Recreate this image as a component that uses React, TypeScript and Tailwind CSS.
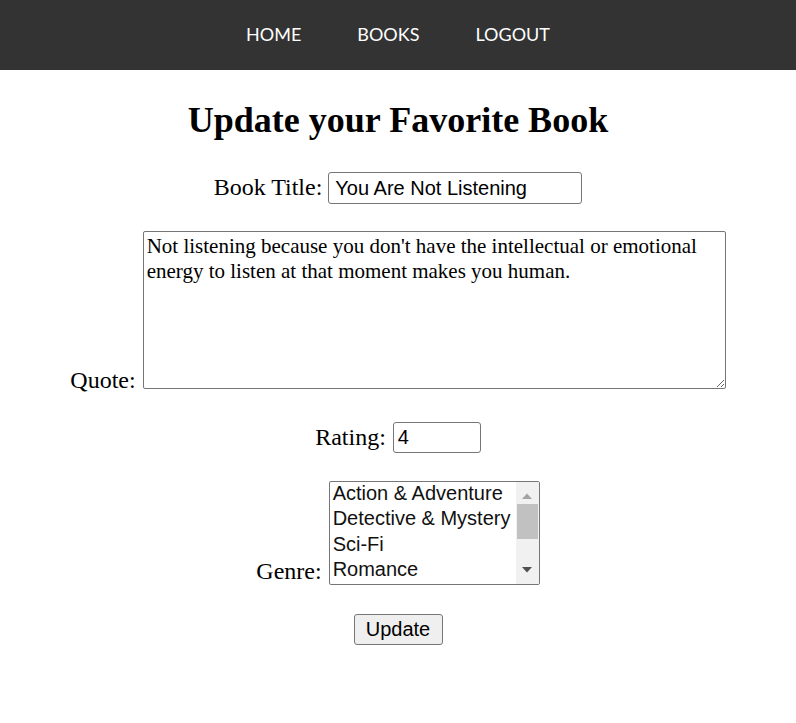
import React from 'react';

const genres = [
  'Action & Adventure',
  'Detective & Mystery',
  'Sci-Fi',
  'Romance',
  'Horror',
  'Fantasy',
  'Biography',
];

const App = () => {
  return (
    <div className="min-h-screen bg-white text-black font-['Liberation_Serif','Times_New_Roman',serif]">
      {/* Top nav */}
      <nav className="h-[70px] bg-[#333333] flex items-center justify-center gap-[56px] font-['Lato',sans-serif] text-[18px] text-white uppercase">
        <a href="#" className="leading-none -translate-y-[1px]">Home</a>
        <a href="#" className="leading-none -translate-y-[1px]">Books</a>
        <a href="#" className="leading-none -translate-y-[1px]">Logout</a>
      </nav>

      <main className="flex flex-col items-center">
        <h1 className="mt-[30px] text-[36px] leading-[41px] font-bold">Update your Favorite Book</h1>

        {/* Title */}
        <div className="mt-[31px] flex items-center justify-center gap-[6px]">
          <label className="text-[24px] leading-[24px] -translate-y-[1px]">Book Title:</label>
          <input
            type="text"
            defaultValue="You Are Not Listening"
            className="w-[254px] h-[32px] px-[6px] border border-[#767676] rounded-[3px] bg-white font-['Liberation_Sans',Arial,sans-serif] text-[20px] leading-[23px] outline-none"
          />
        </div>

        {/* Quote */}
        <div className="mt-[27px] flex items-end justify-center gap-[7px]">
          <label className="text-[24px] leading-[24px] translate-y-[3px]">Quote:</label>
          <textarea
            defaultValue="Not listening because you don't have the intellectual or emotional energy to listen at that moment makes you human."
            className="w-[583px] h-[158px] px-[3px] pt-[2px] border border-[#767676] rounded-[2px] bg-white text-[21px] leading-[25px] outline-none resize"
          />
        </div>

        {/* Rating */}
        <div className="mt-[33px] flex items-center justify-center gap-[7px]">
          <label className="text-[24px] leading-[24px] -translate-y-[1px]">Rating:</label>
          <input
            type="text"
            defaultValue="4"
            className="w-[88px] h-[31px] px-[4px] border border-[#767676] rounded-[3px] bg-white font-['Liberation_Sans',Arial,sans-serif] text-[20px] leading-[23px] outline-none"
          />
        </div>

        {/* Genre */}
        <div className="mt-[28px] flex items-end justify-center gap-[7px]">
          <label className="text-[24px] leading-[24px] -translate-y-[2px]">Genre:</label>
          <div className="w-[211px] h-[104px] flex border border-[#767676] rounded-[2px] bg-white overflow-hidden font-['Liberation_Sans',Arial,sans-serif] text-[20px] text-[#111]">
            <ul className="flex-1 text-left">
              {genres.slice(0, 4).map((g) => (
                <li key={g} className="h-[25.4px] leading-[23px] pl-[3px] whitespace-nowrap">
                  {g}
                </li>
              ))}
            </ul>
            <div className="w-[23px] bg-[#f1f1f1] flex flex-col items-center">
              <svg width="12" height="8" viewBox="0 0 12 8" className="mt-[10px]">
                <path d="M1 7 L6 1.5 L11 7 Z" fill="#a3a3a3" />
              </svg>
              <div className="mt-[4px] w-[21px] h-[35px] bg-[#c1c1c1]" />
              <div className="flex-1" />
              <svg width="12" height="8" viewBox="0 0 12 8" className="mb-[10px]">
                <path d="M1 1 L11 1 L6 6.5 Z" fill="#505050" />
              </svg>
            </div>
          </div>
        </div>

        {/* Submit */}
        <button
          type="button"
          className="mt-[29px] w-[89px] h-[31px] border border-[#767676] rounded-[3px] bg-[#efefef] font-['Liberation_Sans',Arial,sans-serif] text-[20px] leading-[23px]"
        >
          Update
        </button>
      </main>
    </div>
  );
};

export default App;
